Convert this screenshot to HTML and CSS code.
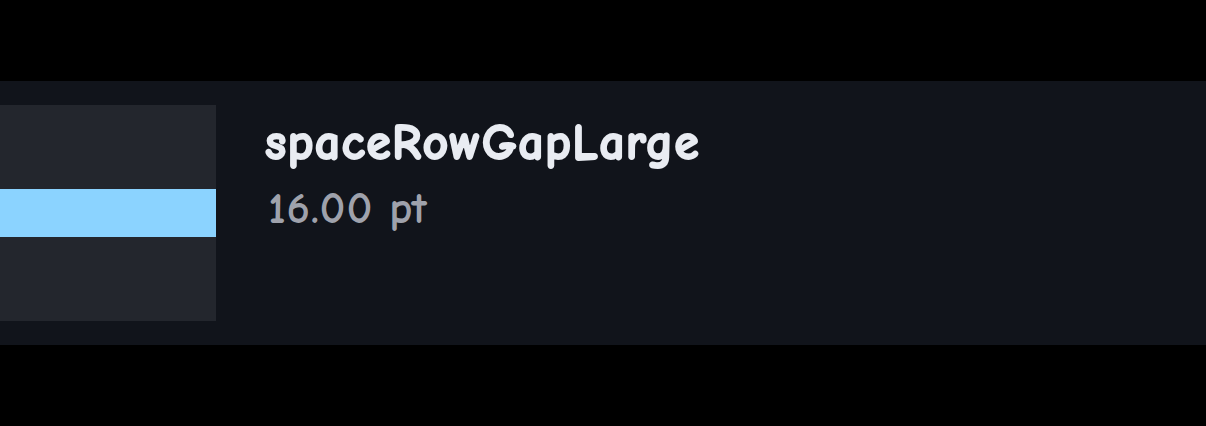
FILE: index.html
```html
<!DOCTYPE html>
<html lang="en">
<head>
<meta charset="utf-8">
<title>spaceRowGapLarge</title>
<link rel="stylesheet" href="styles.css">
</head>
<body>
<main class="token-row">
  <div class="preview"><div class="gap"></div></div>
  <div class="details">
    <h1 class="name">spaceRowGapLarge</h1>
    <p class="value">16.00 pt</p>
  </div>
</main>
</body>
</html>
```
FILE: styles.css
```css
body {
  margin: 0;
  min-height: 426px;
  box-sizing: border-box;
  padding: 81px 0;
  background: #000;
  font-family: "Chalkboard SE", "Comic Neue", "Comic Sans MS", Lato, sans-serif;
}
.token-row {
  display: flex;
  gap: 49px;
  height: 264px;
  box-sizing: border-box;
  padding: 24px 0;
  background: #11141b;
}
.preview {
  display: flex;
  align-items: center;
  width: 216px;
  height: 216px;
  background: #23262d;
}
.gap {
  width: 100%;
  height: 48px;
  background: #8bd3ff;
}
.details { padding-top: 6px; }
.name, .value {
  margin: 0;
  white-space: nowrap;
}
.name {
  font-size: 50px;
  line-height: 64px;
  font-weight: 700;
  letter-spacing: 1.25px;
  color: #e9ecf2;
  -webkit-text-stroke: 1.8px #e9ecf2;
}
.value {
  padding: 2px 0 0 4px;
  font-size: 41px;
  line-height: 64px;
  font-weight: 400;
  letter-spacing: 2.1px;
  color: #9fa2ac;
  -webkit-text-stroke: 1.8px #9fa2ac;
}
```
